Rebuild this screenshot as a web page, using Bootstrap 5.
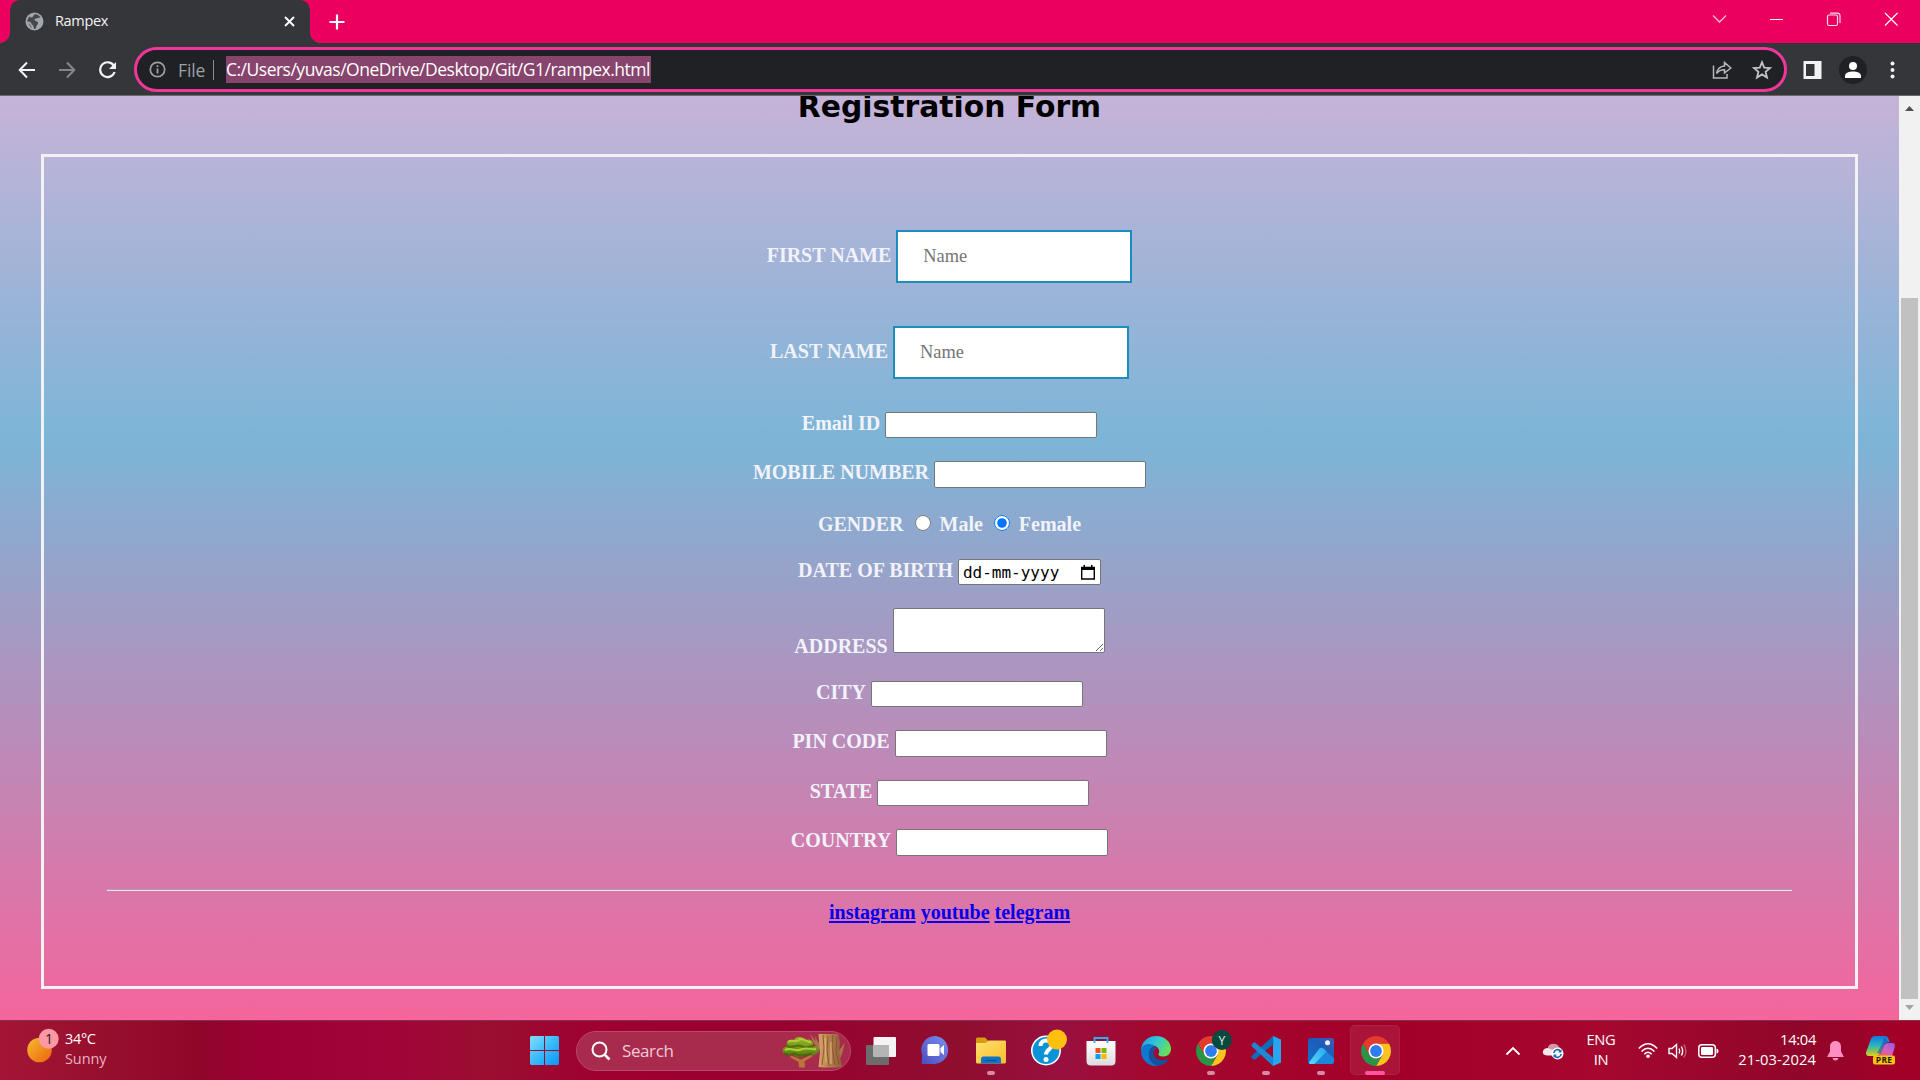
<!DOCTYPE html>
<html lang="en">
<head>
<meta charset="utf-8">
<title>Rampex</title>
<link href="https://cdn.jsdelivr.net/npm/bootstrap@5.3.0/dist/css/bootstrap.min.css" rel="stylesheet">
<script src="https://cdn.jsdelivr.net/npm/bootstrap@5.3.0/dist/js/bootstrap.bundle.min.js"></script>
<style>
  html, body { height: 100%; }
  body { font-family: "Open Sans", "Noto Sans", sans-serif; font-size: 15px; line-height: 20px; color: #fff; }
  svg { display: block; flex: none; }

  /* browser frame */
  .tabstrip { height: 43px; background: #ec005f; padding-left: 10px; }
  .browser-tab { width: 300px; height: 43px; background: #35363a; border-radius: 10px 10px 0 0; padding: 0 12px 1px 15px; }
  .browser-tab::before, .browser-tab::after { content: ""; position: absolute; bottom: 0; width: 10px; height: 10px; }
  .browser-tab::before { left: -10px; background: radial-gradient(circle at 0 0, transparent 9.5px, #35363a 10px); }
  .browser-tab::after { right: -10px; background: radial-gradient(circle at 100% 0, transparent 9.5px, #35363a 10px); }
  .tab-title { font-size: 14.5px; letter-spacing: -.35px; margin-left: 11px; color: #f4f4f5; }
  .new-tab { margin-left: 19px; }
  .win-controls { width: 230px; padding-bottom: 6px; }
  .toolbar { height: 53px; background: #35363a; border-bottom: 1px solid #6a686e; padding: 4px 0 3px 18px; }
  .omnibox { width: 1653px; height: 45px; margin-left: 17px; border: 3px solid #f1369b; border-radius: 23px; background: #202124; padding: 0 12px 0 12px; font-size: 17.5px; }
  .scheme { color: #9aa0a6; margin-left: 12px; width: 35px; letter-spacing: -.1px; }
  .v-sep { width: 1px; height: 20px; background: #8a8d92; }
  .url-sel { margin-left: 12px; height: 27px; line-height: 26px; background: #87446c; width: 425px; letter-spacing: -.5px; white-space: nowrap; }

  /* page */
  .viewport { height: 924px; }
  .page-bg { width: 1899px; padding: 0 41px; background: linear-gradient(#c6b3d8 0, #7cb5d7 344px, #f4659c 924px); overflow: hidden; }
  .page-title { display: flow-root; font: bold 29.8px/36px "DejaVu Sans", Verdana, sans-serif; color: #000; height: 58px; margin: 0; }
  .page-title span { display: block; margin-top: -7px; }
  .form-box { height: 835px; border: 3px solid #f2f2f2; padding: 73px 63px 0; font: bold 20px/23px "Liberation Serif", "Times New Roman", serif; color: #f2f2fa; }
  .f-row { height: 49px; column-gap: 5px; }
  .f-row input.plain, .f-row textarea, .date-box { width: 212px; height: 26px; border: 1px solid #767676; border-radius: 2px; background: #fff; padding: 0; outline: 0; display: block; }
  .f-row.tall input.plain { height: 27px; }
  .f-row textarea { height: 45px; }
  .f-row input.named { width: 236px; height: 53px; border: 2px solid #1c8dbc; background: #fff; padding: 0 25px; font: 18.4px "Liberation Serif", serif; outline: 0; }
  .f-row input.named::placeholder { color: #757575; }
  .f-row input[type=radio] { width: 16px; height: 16px; margin: 2px 4px 0 6px; }
  .named-row label { padding-top: 14px; }
  .date-box { width: 143px; color: #000; font: 16px/25px "DejaVu Sans Mono", monospace; padding: 0 5px 0 4px; }
  .rule { height: 2px; border-top: 1px solid #b09cac; border-bottom: 1px solid #f1e4ea; }
  .link-row { padding-top: 10px; gap: 5px; }
  .link-row a { color: #00e; text-decoration: underline; text-decoration-thickness: 2px; text-underline-offset: 2px; }
  .sbar { width: 21px; background: #f1f1f1; padding: 10px 2px 7px; }
  .sbar-thumb { width: 17px; height: 701px; background: #c1c1c1; margin-top: auto; margin-bottom: 6px; }

  /* taskbar */
  .taskbar { height: 60px; border-top: 1px solid #85304c; background: linear-gradient(90deg, #a41536 0, #98102e 90px, #90062a 200px, #9e0036 270px, #a10538 400px, #9a0e30 490px, #9f0030 600px, #9a0030 760px, #8f0e2e 960px, #991040 1060px, #a3082f 1150px, #a30029 1400px, #a5072f 1600px, #90062a 1800px, #a30028 1900px); }
  .weather { width: 530px; padding-left: 26px; font-size: 14.5px; }
  .weather svg { margin-top: -12px; }
  .weather .ink { margin: -3px 0 0 6px; letter-spacing: -.35px; }
  .soft { color: #e5b3c1; }
  .search-pill { width: 275px; height: 40px; margin-left: 17px; margin-right: 2px; border: 1px solid #b9496c; border-radius: 20px; background: #a82a4d; padding: 0 0 0 14px; font-size: 17px; color: #f0cbd6; }
  .task { width: 55px; height: 59px; }
  .task.open::after { content: ""; position: absolute; bottom: 5px; left: 23.5px; width: 8px; height: 4px; border-radius: 2px; background: #d889a5; }
  .task.current::before { content: ""; position: absolute; left: 2px; top: 4px; width: 50px; height: 50px; border-radius: 5px; background: rgba(255,255,255,.08); border: 1px solid rgba(255,255,255,.06); }
  .task.current::after { left: 17px; width: 20px; background: #ff559f; }
  .task svg { position: relative; }
  .tray { font-size: 14.7px; letter-spacing: -.3px; }
  .two-line { margin-top: -3px; }
</style>
</head>
<body class="d-flex flex-column overflow-hidden">

<svg width="0" height="0" class="position-absolute">
  <defs>
    <linearGradient id="gSun" x1="0" y1="0" x2="1" y2="1"><stop offset=".1" stop-color="#f5b32b"/><stop offset=".9" stop-color="#ee6a10"/></linearGradient>
    <linearGradient id="gWin" x1="0" y1="0" x2="1" y2="1"><stop offset="0" stop-color="#84deff"/><stop offset=".5" stop-color="#38bcf8"/><stop offset="1" stop-color="#0a94fa"/></linearGradient>
    <linearGradient id="gFold" x1="0" y1="0" x2="1" y2="1"><stop offset="0" stop-color="#ffe070"/><stop offset="1" stop-color="#fbbd28"/></linearGradient>
    <linearGradient id="gTeams" x1="1" y1="0" x2="0" y2="1"><stop offset="0" stop-color="#7b8fee"/><stop offset="1" stop-color="#4a4cc0"/></linearGradient>
    <linearGradient id="gEdgeA" x1="0" y1="0" x2="1" y2=".4"><stop offset="0" stop-color="#1b9de2"/><stop offset=".55" stop-color="#35c6d6"/><stop offset="1" stop-color="#62e05a"/></linearGradient>
    <linearGradient id="gPho" x1="0" y1="1" x2="1" y2="0"><stop offset="0" stop-color="#1470d0"/><stop offset=".6" stop-color="#1b5cb8"/><stop offset="1" stop-color="#4a58b0"/></linearGradient>
    <linearGradient id="gMtn" x1="0" y1="1" x2="1" y2="0"><stop offset="0" stop-color="#5ad9fb"/><stop offset="1" stop-color="#2aa6ec"/></linearGradient>
    <linearGradient id="gTrunk"><stop offset="0" stop-color="#d9a368"/><stop offset=".4" stop-color="#b9834f"/><stop offset="1" stop-color="#8f5d38"/></linearGradient>
    <linearGradient id="gLeaf" x1="0" y1="0" x2="0" y2="1"><stop offset="0" stop-color="#9ab52a"/><stop offset="1" stop-color="#557a10"/></linearGradient>
    <linearGradient id="gCopA" x1="0" y1="0" x2="0" y2="1"><stop offset="0" stop-color="#1775d8"/><stop offset=".45" stop-color="#22b4c8"/><stop offset=".75" stop-color="#84c454"/><stop offset="1" stop-color="#e8cc2a"/></linearGradient>
    <linearGradient id="gCopB" x1="0" y1="1" x2="1" y2="0"><stop offset="0" stop-color="#f0625a"/><stop offset=".5" stop-color="#d560c0"/><stop offset="1" stop-color="#8c5cf0"/></linearGradient>
    <linearGradient id="gBag" x1="0" y1="0" x2="0" y2="1"><stop offset="0" stop-color="#fff"/><stop offset="1" stop-color="#dcdce0"/></linearGradient>
    <g id="chromeLogo">
      <path d="M15 7.500 H27.990 A15 15 0 0 1 15 30 L21.500 18.750 Z" fill="#fcc31e"/>
      <path d="M2.010 7.500 A15 15 0 0 0 15 30 L21.500 18.750 L15 15 L8.500 18.750 Z" fill="#2a9447"/>
      <path d="M15 7.500 H27.990 A15 15 0 0 0 2.010 7.500 L8.500 18.750 Z" fill="#e33b2e"/>
      <circle cx="15" cy="15" r="7.500" fill="#fff"/><circle cx="15" cy="15" r="5.900" fill="#2f7cf0"/>
    </g>
  </defs>
</svg>

<!-- tab strip -->
<header class="tabstrip d-flex align-items-center flex-shrink-0">
  <div class="browser-tab position-relative d-flex align-items-center">
    <svg width="19" height="19" viewBox="0 0 19 19"><circle cx="9.500" cy="9.500" r="9" fill="#a3a8ae"/><path d="M9.500 2.200 C12 1.800 14.500 3.500 15.500 5.500 C13.500 5 13 6.500 11 6.500 C9.500 6.500 9 7.500 10 8.500 C11 9.500 13 9 13 11 C13 13 11 13 11 16.500 L9.500 17 C8 15.500 9 14 7.500 13 C6 12 6.500 10.500 5 10 L2 9.200 C2.500 7 3.500 5.500 5 4.500 C6 6 7.500 5.500 8 4.500 Z" fill="#45474b"/><path d="M3.500 10.500 L6 13 L7 16.500 Q4 15 3.500 10.500 Z" fill="#45474b" opacity=".5"/></svg>
    <span class="tab-title">Rampex</span>
    <svg class="ms-auto" width="17" height="17" viewBox="0 0 17 17" stroke="#fff" stroke-width="1.800"><path d="M4 4 L13 13 M13 4 L4 13"/></svg>
  </div>
  <svg class="new-tab" width="16" height="16" viewBox="0 0 16 16" stroke="#fff" stroke-width="2.200"><path d="M8 .5 V15.500 M.5 8 H15.500"/></svg>
  <div class="win-controls ms-auto d-flex align-items-center">
    <svg width="58" height="16" viewBox="0 0 58 16" fill="none" stroke="#fbb9d2" stroke-width="1.300"><path d="M23 4.500 L29.500 11 L36 4.500"/></svg>
    <svg width="57" height="16" viewBox="0 0 57 16" stroke="#fff"><path d="M22 8.500 H35"/></svg>
    <svg width="57" height="16" viewBox="0 0 57 16" fill="none" stroke="#ffd9e7" stroke-width="1.200"><rect x="22.500" y="4" width="10" height="10.500" rx="1.500"/><path d="M25 2.200 H32 Q35 2.200 35 5 V12"/></svg>
    <svg width="58" height="16" viewBox="0 0 58 16" stroke="#fff" stroke-width="1.200"><path d="M23 2 L35.500 14.500 M35.500 2 L23 14.500"/></svg>
  </div>
</header>

<!-- toolbar -->
<div class="toolbar d-flex align-items-center flex-shrink-0">
  <svg width="18" height="18" viewBox="0 0 18 18" fill="none" stroke="#f1f3f4" stroke-width="2"><path d="M17 9 H2 M9 1.500 L1.700 9 L9 16.500"/></svg>
  <svg style="margin-left:22px" width="18" height="18" viewBox="0 0 18 18" fill="none" stroke="#85868a" stroke-width="2"><path d="M1 9 H16 M9 1.500 L16.300 9 L9 16.500"/></svg>
  <svg style="margin-left:22px" width="19" height="18" viewBox="0 0 19 18" fill="none" stroke="#f1f3f4" stroke-width="2.200"><path d="M16 5 A7.400 7.400 0 1 0 16.600 11"/><path d="M18 1 V8 H11 Z" fill="#f1f3f4" stroke="none"/></svg>
  <div class="omnibox d-flex align-items-center">
    <svg width="17" height="17" viewBox="0 0 17 17"><circle cx="8.500" cy="8.500" r="7.200" fill="none" stroke="#9aa0a6" stroke-width="1.700"/><path d="M7.600 7.500 H9.400 V12.500 H7.600 Z M7.600 4.300 H9.400 V6.100 H7.600 Z" fill="#9aa0a6"/></svg>
    <span class="scheme">File</span><span class="v-sep"></span>
    <span class="url-sel">C:/Users/yuvas/OneDrive/Desktop/Git/G1/rampex.html</span>
    <svg class="ms-auto" width="20" height="20" viewBox="0 0 20 20" fill="none" stroke="#b4b7bb" stroke-width="1.500"><path d="M1.500 5.500 V18 H15 V14"/><path d="M4.500 13.500 C5.500 8.500 8.500 6.300 12.500 6 V2.500 L18.800 8 L12.500 13 V9.800 C9 9.800 6.500 11 4.500 13.500 Z"/></svg>
    <svg style="margin-left:20px" width="20" height="20" viewBox="0 0 20 20" fill="none" stroke="#c0c3c6" stroke-width="1.800"><path d="M10 2.200 L12.200 7.600 L18 8 L13.600 11.800 L15 17.500 L10 14.400 L5 17.500 L6.400 11.800 L2 8 L7.800 7.600 Z"/></svg>
  </div>
  <svg style="margin-left:16px" width="19" height="18" viewBox="0 0 19 18"><path d="M.5 0 H18.500 V18 H.5 Z M3 3 V15 H11.500 V3 Z" fill="#f1f3f4" fill-rule="evenodd"/></svg>
  <svg style="margin-left:17px" width="28" height="28" viewBox="0 0 28 28"><circle cx="14" cy="14" r="14" fill="#202124"/><circle cx="14" cy="10" r="4" fill="#fff"/><path d="M6 22 V20 C6 16.500 10.500 15.500 14 15.500 S22 16.500 22 20 V22 Z" fill="#fff"/></svg>
  <svg style="margin-left:23px" width="5" height="18" viewBox="0 0 5 18" fill="#f1f3f4"><circle cx="2.500" cy="2.500" r="2"/><circle cx="2.500" cy="9" r="2"/><circle cx="2.500" cy="15.500" r="2"/></svg>
</div>

<!-- web page -->
<main class="viewport d-flex flex-shrink-0">
  <div class="page-bg">
    <h2 class="page-title text-center"><span>Registration Form</span></h2>
    <form class="form-box">
      <div class="f-row named-row d-flex justify-content-center align-items-start" style="height:96px"><label for="fn">FIRST NAME</label><input class="named" id="fn" placeholder="Name"></div>
      <div class="f-row named-row d-flex justify-content-center align-items-start" style="height:86px"><label for="ln">LAST NAME</label><input class="named" id="ln" placeholder="Name"></div>
      <div class="f-row d-flex justify-content-center align-items-start"><label for="em">Email ID</label><input class="plain" id="em"></div>
      <div class="f-row tall d-flex justify-content-center align-items-start" style="height:52px"><label for="mo">MOBILE NUMBER</label><input class="plain" id="mo"></div>
      <div class="f-row d-flex justify-content-center align-items-start" style="height:46px"><span>GENDER</span><input type="radio" name="g" id="m"><label for="m">Male</label><input type="radio" name="g" id="f" checked><label for="f">Female</label></div>
      <div class="f-row d-flex justify-content-center align-items-start"><span>DATE OF BIRTH</span>
        <div class="date-box d-flex justify-content-between align-items-center"><span>dd-mm-yyyy</span><svg width="14" height="15" viewBox="0 0 14 15"><path d="M.7 2.500 H13.300 V14 H.7 Z" fill="none" stroke="#000" stroke-width="1.400"/><path d="M0 2 H14 V5 H0 Z M2.500 0 H4 V3 H2.500 Z M10 0 H11.500 V3 H10 Z"/></svg></div></div>
      <div class="f-row d-flex justify-content-center align-items-start" style="height:73px"><label for="ad" style="padding-top:27px">ADDRESS</label><textarea id="ad"></textarea></div>
      <div class="f-row d-flex justify-content-center align-items-start"><label for="ci">CITY</label><input class="plain" id="ci"></div>
      <div class="f-row tall d-flex justify-content-center align-items-start" style="height:50px"><label for="pi">PIN CODE</label><input class="plain" id="pi"></div>
      <div class="f-row d-flex justify-content-center align-items-start"><label for="st">STATE</label><input class="plain" id="st"></div>
      <div class="f-row tall d-flex justify-content-center align-items-start" style="height:60px"><label for="co">COUNTRY</label><input class="plain" id="co"></div>
      <div class="rule"></div>
      <div class="link-row d-flex justify-content-center"><a href="#">instagram</a><a href="#">youtube</a><a href="#">telegram</a></div>
    </form>
  </div>
  <div class="sbar d-flex flex-column align-items-center">
    <svg width="9" height="5" viewBox="0 0 9 5"><path d="M0 5 L4.500 0 L9 5 Z" fill="#505050"/></svg>
    <div class="sbar-thumb"></div>
    <svg width="9" height="5" viewBox="0 0 9 5" style="margin-bottom:3px"><path d="M0 0 L4.500 5 L9 0 Z" fill="#a3a3a3"/></svg>
  </div>
</main>

<!-- taskbar -->
<footer class="taskbar d-flex align-items-center flex-shrink-0">
  <div class="weather d-flex align-items-center">
    <svg width="33" height="36" viewBox="0 0 33 36"><circle cx="13.500" cy="23" r="12.300" fill="url(#gSun)"/><circle cx="22.700" cy="11.800" r="10" fill="#fd98a5"/><text x="22.900" y="17" font-size="14" text-anchor="middle" fill="#222">1</text></svg>
    <div class="ink"><div>34°C</div><div class="soft" style="letter-spacing:-.1px">Sunny</div></div>
  </div>
  <svg width="29" height="29" viewBox="0 0 29 29"><path d="M1 0 H14 V14 H0 V1 Z M15 0 H28 L29 1 V14 H15 Z M0 15 H14 V29 H1 L0 28 Z M15 15 H29 V28 L28 29 H15 Z" fill="url(#gWin)"/></svg>
  <div class="search-pill d-flex align-items-center">
    <svg width="20" height="20" viewBox="0 0 20 20" fill="none" stroke="#fff" stroke-width="2"><circle cx="8.500" cy="8.500" r="7"/><path d="M13.700 13.700 L18.500 18.500" stroke-width="2.600"/></svg>
    <span style="margin-left:11px;letter-spacing:-.4px">Search</span>
    <svg class="ms-auto" style="margin-right:3px" width="65" height="34" viewBox="0 0 65 34">
      <path d="M17 33.500 L16.500 28 L8 23 L9 21.500 L19 25.500 L30 20.500 L31 22 L22.500 27.500 L23 33.500 Z" fill="#b8763a"/>
      <path d="M5 12 C3 6 10 5 12 6 C13 2 21 2 24 6 C29 4 32 8 31 12 C37 12 39 17 35.500 19 C31 23 26 21 23 21 C19 25 12 23 12 20 C6 23 0 20 .5 16 C1 13 4 13 5 12 Z" fill="url(#gLeaf)"/>
      <path d="M4.500 11 C8 16 13 10 19 12 C25 16 28 11 32 12 M2 19 C8 23 11 18 14 20 C20 24 25 19 30 20" stroke="#3f6409" stroke-width="2.200" fill="none" opacity=".7"/>
      <path d="M6 8 C10 5 13 9 17 6 S26 9 29 8 M3 16 C9 13 13 18 19 15.500 S30 16 34 15" stroke="#b4cf35" stroke-width="2" fill="none"/>
      <path d="M38 16 L32 10 L28 0 L33.500 7 L33 2 L36 8 L40 11 Z M56 18 L63 8.500 L60 20 L57 27 Z" fill="#a8734a"/>
      <path d="M36.500 0 H56 L58 8 L57 18 L60 33 Q48 34 36.500 33 L38 18 Z" fill="url(#gTrunk)"/>
      <path d="M41 1 L42 14 L40 31 M46 2 L45 16 L47 32 M51 1 L50 12 L53 31 M55 3 L54 18 L57 30" stroke="#7d4f2c" stroke-width=".8" fill="none"/>
      <path d="M43 4 L44 28 M49 8 L49 30" stroke="#e6b981" stroke-width="1" fill="none"/>
    </svg>
  </div>
  <div class="task position-relative d-flex align-items-center justify-content-center"><svg width="30" height="28" viewBox="0 0 30 28"><rect y="8" width="23" height="20" rx="1" fill="#6c6c6c"/><rect x="7.500" width="22.500" height="20" rx="1" fill="#f4f4f4"/><path d="M7.500 8 H23 V20 H7.500 Z" fill="#b5b5b5"/></svg></div>
  <div class="task position-relative d-flex align-items-center justify-content-center"><svg width="29" height="29" viewBox="0 0 29 29"><path d="M15 0 A14 14 0 1 1 11 28 H.5 L1.200 19 A14 14 0 0 1 15 0 Z" fill="url(#gTeams)"/><rect x="6.500" y="8" width="12" height="12" rx="1.500" fill="#fff"/><path d="M19.500 12 L23 9 V19 L19.500 16 Z" fill="#fff"/></svg></div>
  <div class="task open position-relative d-flex align-items-center justify-content-center"><svg width="30" height="27" viewBox="0 0 30 27"><path d="M0 2 Q0 .5 1.500 .5 H9 L13 4.500 H20 V10 H0 Z" fill="#d99a12"/><path d="M0 6 H9.500 L13 3.500 H29 Q30 3.500 30 5 V25 Q30 26.500 28.500 26.500 H1.500 Q0 26.500 0 25 Z" fill="url(#gFold)"/><path d="M5 26.500 V22 Q5 19.500 7.500 19.500 H23 Q25 19.500 25 22 V26.500 Z" fill="#1273c9"/><path d="M9 23.500 H21" stroke="#0a4e96"/></svg></div>
  <div class="task position-relative d-flex align-items-center justify-content-center"><svg width="36" height="37" viewBox="0 0 36 37" style="left:3px;top:-3px"><circle cx="15" cy="21.500" r="14.200" fill="#0b93d8" stroke="#fff" stroke-width="1.600"/><path d="M9.500 17 C9.500 9.500 20.500 10 20.500 16.500 C20.500 20.500 15 20.500 15 25.500" fill="none" stroke="#fff" stroke-width="4"/><circle cx="15" cy="30.500" r="2.500" fill="#fff"/><circle cx="26" cy="10.500" r="10" fill="#ffbf0e"/></svg></div>
  <div class="task position-relative d-flex align-items-center justify-content-center"><svg width="30" height="30" viewBox="0 0 30 30"><path d="M.5 5 H29.500 V25 Q29.500 29.500 25 29.500 H5 Q.5 29.500 .5 25 Z" fill="url(#gBag)"/><path d="M8.500 7 V2 H21.500 V7" fill="none" stroke="#28b4ea" stroke-width="1.800"/><path d="M9.500 12 H14.500 V17 H9.500 Z" fill="#f04e24"/><path d="M15.500 12 H20.500 V17 H15.500 Z" fill="#7db800"/><path d="M9.500 18 H14.500 V23 H9.500 Z" fill="#00a3ee"/><path d="M15.500 18 H20.500 V23 H15.500 Z" fill="#fdb700"/></svg></div>
  <div class="task position-relative d-flex align-items-center justify-content-center"><svg width="30" height="30" viewBox="0 0 30 30"><path d="M0 15 C0 6 7 0 15 0 C24 0 30 6 30 13 C30 18 26 20.500 22 20.500 C18.500 20.500 17 19 17.500 18 C19 16 18.500 12 14 10 C9 8 2 10 0 15 Z" fill="url(#gEdgeA)"/><path d="M0 15 C0 8 9 6 14 10 C10 11 8 15 8 19 C8 25 13 29 17 29.800 C8 31 0 24 0 15 Z" fill="#0c78d0"/><path d="M14 10.500 C9 12 7.500 15.500 8 19.500 C9 26 14 30 17 29.800 C22 29.300 26 26.500 28 22.500 C22 26 13.500 24 12.500 18 C12 15 13.500 13 15.500 12.300 Z" fill="#12539f"/></svg></div>
  <div class="task open position-relative d-flex align-items-center justify-content-center"><svg width="36" height="36" viewBox="0 0 36 36" style="left:3px;top:-3px"><use href="#chromeLogo" y="6"/><circle cx="25.800" cy="10" r="10" fill="#044a3e"/><text x="25.800" y="14.500" font-size="12" text-anchor="middle" fill="#e4ece9">Y</text></svg></div>
  <div class="task open position-relative d-flex align-items-center justify-content-center"><svg width="30" height="30" viewBox="0 0 30 30"><path d="M22 0 L30 3.500 V26.500 L22 30 Z" fill="#29a5f0"/><path d="M22 0 L22.500 8 L4 23.500 Q3 24 2 23 L.5 21.300 Q0 20.500 1 19.500 Z" fill="#0f6cb8"/><path d="M22 30 L22.500 22 L4 6.500 Q3 6 2 7 L.5 8.700 Q0 9.500 1 10.500 Z" fill="#1b88d4"/></svg></div>
  <div class="task open position-relative d-flex align-items-center justify-content-center"><svg width="26" height="26" viewBox="0 0 26 26"><rect width="26" height="26" rx="2.500" fill="url(#gPho)"/><path d="M5 26 L16 11 L26 20.500 V23.500 Q26 26 23.500 26 Z" fill="#1a86dc"/><path d="M.8 24.800 L11 11 Q13.500 8.500 16 11 L18.500 13.500 L6.500 26 H2.500 Q1.300 26 .8 24.800 Z" fill="url(#gMtn)"/><circle cx="19.500" cy="4.700" r="2.500" fill="#e8f2ff"/></svg></div>
  <div class="task open current position-relative d-flex align-items-center justify-content-center"><svg width="30" height="30" viewBox="0 0 30 30"><use href="#chromeLogo"/></svg></div>

  <div class="tray ms-auto d-flex align-items-center" style="width:415px">
    <svg width="16" height="10" viewBox="0 0 16 10" fill="none" stroke="#fff" stroke-width="1.800"><path d="M1.500 8.500 L8 2 L14.500 8.500"/></svg>
    <svg style="margin-left:21px" width="22" height="19" viewBox="0 0 22 19"><path d="M6 6 A6 5.500 0 0 1 17 6 Q20 7 20 11 L6 12 Z" fill="#d595a9"/><path d="M5 14.500 Q0 14 1 10 Q2 7 6 7 L13 10 V14.500 Z" fill="#f6e8ec"/><circle cx="15.500" cy="12.500" r="6" fill="#fff"/><path d="M11.800 12 A3.800 3.800 0 0 1 18.500 10 M19.200 13 A3.800 3.800 0 0 1 12.500 15" fill="none" stroke="#1467b8" stroke-width="1.600"/><path d="M19.500 8 V11.500 H16 Z M11.500 17 V13.500 H15 Z" fill="#1467b8"/></svg>
    <div class="two-line text-center" style="width:56px;margin-left:9px"><div>ENG</div><div>IN</div></div>
    <svg style="margin-left:9px" width="20" height="17" viewBox="0 0 20 17" fill="none" stroke="#fff" stroke-width="1.500"><path d="M.8 6.500 Q10 -3 19.200 6.500 M3.500 9.500 Q10 3 16.500 9.500 M6.300 12.200 Q10 8.500 13.700 12.200"/><circle cx="10" cy="14.300" r="1.800" fill="#fff" stroke="none"/></svg>
    <svg style="margin-left:10px" width="20" height="18" viewBox="0 0 20 18" fill="none" stroke="#fff" stroke-width="1.400"><path d="M1 6.500 H4 L8.500 2.500 V15.500 L4 11.500 H1 Z"/><path d="M11 6.500 Q12.500 9 11 11.500 M13.300 4.500 Q16 9 13.300 13.500"/><path d="M15.800 2.500 Q20 9 15.800 15.500" opacity=".35"/></svg>
    <svg style="margin-left:10px" width="21" height="14" viewBox="0 0 21 14"><rect x=".8" y=".8" width="16.500" height="12.400" rx="3" fill="none" stroke="#fff" stroke-width="1.500"/><rect x="3" y="3" width="12" height="8" rx="1.200" fill="#fff"/><path d="M18.500 4.500 Q20.500 4.500 20.500 7 Q20.500 9.500 18.500 9.500 Z" fill="#fff"/></svg>
    <div class="two-line text-end" style="width:94px;margin-left:3px"><div>14:04</div><div style="white-space:nowrap;letter-spacing:.12px">21-03-2024</div></div>
    <svg style="margin-left:11px" width="17" height="20" viewBox="0 0 17 20" fill="#ff8fc0"><path d="M8.500 0 C12 0 14 2.500 14 6 V10.500 L16.700 15.500 Q16.800 16 16 16 H1 Q.2 16 .3 15.500 L3 10.500 V6 C3 2.500 5 0 8.500 0 Z"/><path d="M5.500 17 H11.500 Q11 19.500 8.500 19.500 T5.500 17 Z"/></svg>
    <svg style="margin-left:22px" width="30" height="29" viewBox="0 0 30 29"><path d="M5 3 Q6 0 9 0 H19 Q21.500 0 22.500 3 L23.500 6 Q19 6 18 9 L14 18 Q13 20 10 20 H3 Q-1 20 .3 15.500 Z" fill="url(#gCopA)"/><path d="M18 9 Q19 7 21.500 7 H26 Q30 7 28.500 12 L26 20 H13 Z" fill="url(#gCopB)"/><path d="M18.500 1 L23.500 7 Q19 7 18 10 L14.500 18 L11 17 Q16 9 18.500 1 Z" fill="#1c4fae" opacity=".55"/><rect x="7" y="19.500" width="22" height="9" rx="2" fill="#ffc60d"/><text x="18" y="27" font-size="8.500" font-weight="bold" text-anchor="middle" fill="#1b1b1b" letter-spacing=".2">PRE</text></svg>
  </div>
</footer>
</body>
</html>
